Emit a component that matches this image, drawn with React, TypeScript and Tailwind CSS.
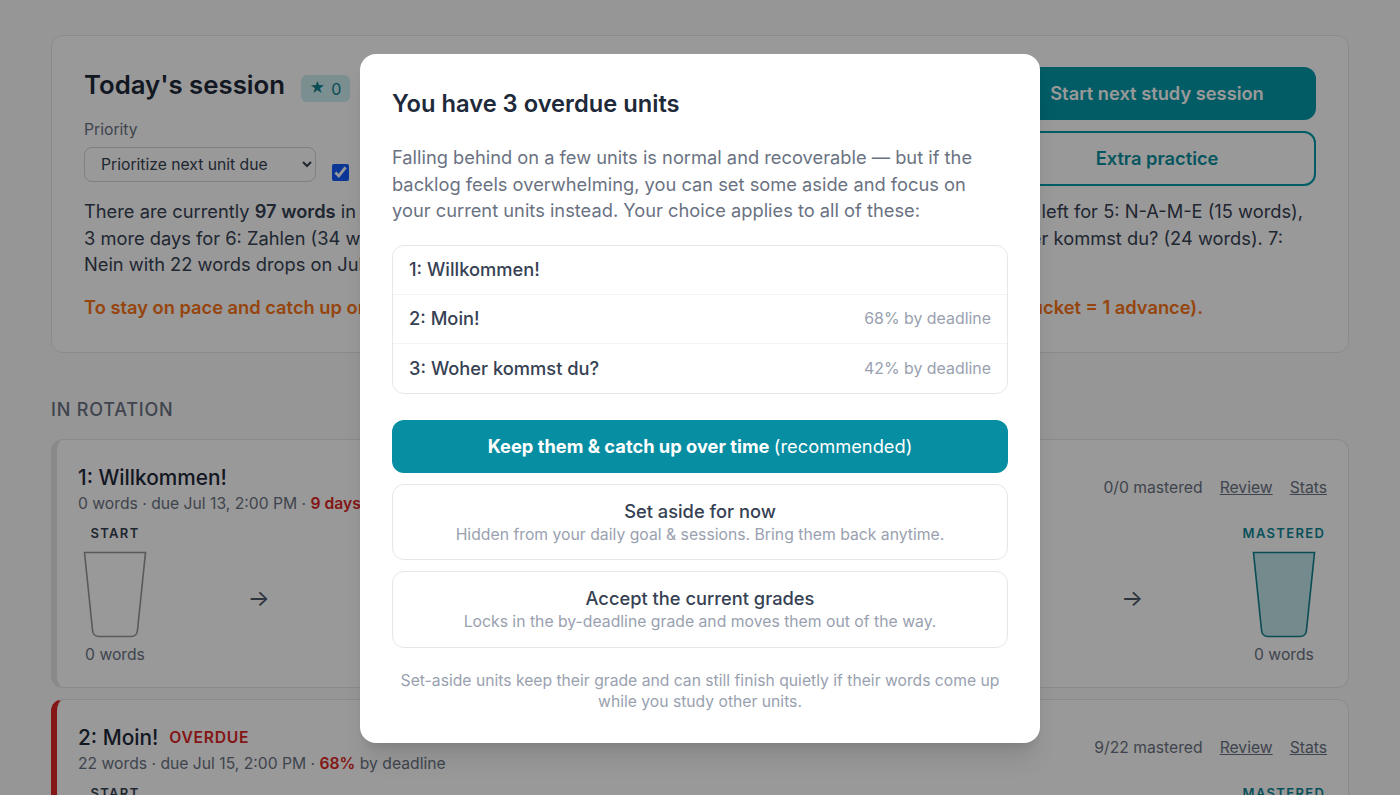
function Cup({ mastered }: { mastered?: boolean }) {
  return (
    <svg width="64" height="87" viewBox="0 0 64 87" className="block">
      <path
        d="M1.5 1.5H62.5L54.5 79Q54 85.5 48 85.5H16Q10 85.5 9.5 79Z"
        fill={mastered ? '#c4e6ea' : 'none'}
        stroke={mastered ? '#0e7f8c' : '#969696'}
        strokeWidth="1.6"
      />
    </svg>
  );
}

function Bucket({ label, mastered }: { label?: string; mastered?: boolean }) {
  return (
    <div className={`flex flex-col items-center ${mastered ? 'w-[86px]' : 'w-[62px]'}`}>
      <div className={`h-[20px] text-[13px] leading-[20px] font-semibold tracking-[1.35px] whitespace-nowrap ${mastered ? 'text-[#0e8796]' : 'text-gray-700'}`}>
        {label}
      </div>
      <div className="mt-[8px]">
        <Cup mastered={mastered} />
      </div>
      {label && <div className="mt-[5px] text-[15.7px] leading-[24px] text-gray-500 whitespace-nowrap">0 words</div>}
      {!label && <div className="mt-[5px] h-[24px]" />}
    </div>
  );
}

function Arrow({ className = '' }: { className?: string }) {
  return <span className={`text-[23px] leading-[24px] text-gray-600 mt-[5px] ${className}`}>→</span>;
}

function BucketRow() {
  return (
    <div className="flex justify-between items-center pl-[6px]">
      <Bucket label="START" />
      <Arrow className="-translate-x-[1px]" />
      <Bucket />
      <Arrow />
      <Bucket />
      <Arrow />
      <Bucket />
      <Arrow className="translate-x-[5px]" />
      <Bucket label="MASTERED" mastered />
    </div>
  );
}

function UnitCard({ title, overdue, meta, mastered, accent }: {
  title: string;
  overdue?: boolean;
  meta: React.ReactNode;
  mastered: string;
  accent: string;
}) {
  return (
    <section className={`h-[249px] shrink-0 rounded-xl border border-gray-200 border-l-[6px] ${accent} bg-white pl-[21px] pr-[21px] pt-[23px]`}>
      <div className="flex justify-between">
        <div>
          <div className="flex items-center gap-[11px]">
            <h3 className="text-[20.8px] leading-[30px] font-medium text-gray-800">{title}</h3>
            {overdue && <span className="text-[15.7px] font-semibold tracking-[0.7px] text-[#dc2626]">OVERDUE</span>}
          </div>
          <p className="text-[15.7px] leading-[21px] text-gray-500">{meta}</p>
        </div>
        <div className="flex gap-[17px] text-[15.7px] leading-[24px] text-gray-500 pt-[13px]">
          <span>{mastered}</span>
          <a className="underline">Review</a>
          <a className="underline">Stats</a>
        </div>
      </div>
      <div className="mt-[9px]">
        <BucketRow />
      </div>
    </section>
  );
}

function OverdueRow({ name, pct }: { name: string; pct?: string }) {
  return (
    <li className="h-[49px] flex items-center justify-between px-4 pt-[1px] border-b border-gray-100 last:border-b-0">
      <span className="text-[18.3px] font-medium text-gray-700">{name}</span>
      {pct && <span className="text-[15.9px] text-gray-400">{pct} by deadline</span>}
    </li>
  );
}

function ChoiceButton({ title, hint }: { title: string; hint: string }) {
  return (
    <button className="h-[76.5px] w-full rounded-xl border border-gray-200 bg-white text-center">
      <span className="block text-[18.3px] leading-[26px] font-medium text-gray-700">{title}</span>
      <span className="block text-[15.75px] leading-[22px] text-gray-400">{hint}</span>
    </button>
  );
}

export default function App() {
  return (
    <div className="relative h-screen overflow-hidden bg-[#fafafa] font-['Inter',sans-serif]">
      <main className="flex flex-col px-[51px] pt-[35px]">
        <section className="h-[318px] shrink-0 rounded-xl border border-gray-200 bg-white px-[32px] pt-[31px]">
          <div className="flex justify-between">
            <div>
              <div className="flex items-center gap-[16px] h-[40px]">
                <h2 className="-mt-[4px] text-[25.75px] font-semibold text-gray-800">Today's session</h2>
                <span className="mt-[3px] h-[27px] w-[49px] rounded-md bg-[#cdeef2] flex items-center justify-center gap-[6px] text-base text-[#0e7f8c]">
                  <span className="text-[15px]">★</span>0
                </span>
              </div>
              <label className="block mt-[11px] mb-[5px] text-[15.7px] leading-[24px] text-gray-500">Priority</label>
              <div className="flex items-start gap-[16px]">
                <select className="h-[35px] w-[232px] rounded-lg border border-gray-300 pl-[12px] text-[15.7px] text-gray-700">
                  <option>Prioritize next unit due</option>
                </select>
                <input type="checkbox" defaultChecked className="mt-[17px] w-[17px] h-[17px] accent-blue-600" />
              </div>
            </div>
            <div className="w-[318px] flex flex-col gap-[11px]">
              <button className="h-[53px] rounded-xl bg-[#029aa9] text-[18.3px] font-semibold text-white">Start next study session</button>
              <button className="h-[55px] rounded-xl border-2 border-[#029aa9] text-[18.3px] font-semibold text-[#0a8fa0]">Extra practice</button>
            </div>
          </div>
          <div className="mt-[12px] text-[18.3px] leading-[26.5px] text-gray-700">
            <div className="flex justify-between whitespace-nowrap">
              <span>There are currently <b className="font-semibold">97 words</b> in</span>
              <span className="mr-[13px]">days left for 5: N-A-M-E (15 words),</span>
            </div>
            <div className="flex justify-between whitespace-nowrap">
              <span>3 more days for 6: Zahlen (34 words)</span>
              <span className="mr-[33px]">Woher kommst du? (24 words). 7:</span>
            </div>
            <div>Nein with 22 words drops on Jul 20.</div>
          </div>
          <div className="mt-[16px] flex justify-between whitespace-nowrap text-[18.3px] font-semibold text-[#f97316]">
            <span>To stay on pace and catch up on</span>
            <span className="mr-[113px]">1 bucket = 1 advance).</span>
          </div>
        </section>
        <h3 className="mt-[45px] text-lg leading-[24px] font-medium tracking-[0.8px] text-gray-500">IN ROTATION</h3>
        <div className="mt-[17px] flex flex-col gap-[11px]">
          <UnitCard
            title="1: Willkommen!"
            accent="border-l-[#e4e4e4]"
            mastered="0/0 mastered"
            meta={<>0 words · due Jul 13, 2:00 PM · <b className="font-semibold text-[#dc2626]">9 days</b></>}
          />
          <UnitCard
            title="2: Moin!"
            overdue
            accent="border-l-[#dc2626]"
            mastered="9/22 mastered"
            meta={<>22 words · due Jul 15, 2:00 PM · <b className="font-semibold text-[#dc2626]">68%</b> by deadline</>}
          />
        </div>
      </main>

      <div className="absolute inset-0 bg-black/40 flex items-start justify-center pt-[54px]">
        <div className="w-[680px] h-[689px] rounded-2xl bg-white p-8 shadow-xl">
          <h2 className="text-[23.7px] leading-[36px] font-semibold text-gray-800">You have 3 overdue units</h2>
          <p className="mt-[22px] text-[18.3px] leading-[26.5px] text-gray-500">
            Falling behind on a few units is normal and recoverable — but if the backlog feels overwhelming, you can set some aside and focus on your current units instead. Your choice applies to all of these:
          </p>
          <ul className="mt-[21px] rounded-xl border border-gray-200">
            <OverdueRow name="1: Willkommen!" />
            <OverdueRow name="2: Moin!" pct="68%" />
            <OverdueRow name="3: Woher kommst du?" pct="42%" />
          </ul>
          <div className="mt-[26px] flex flex-col gap-[11px]">
            <button className="h-[53px] rounded-xl bg-[#078ea2] pt-[1px] text-[18.3px] font-bold text-white">
              Keep them &amp; catch up over time <span className="font-normal">(recommended)</span>
            </button>
            <ChoiceButton title="Set aside for now" hint="Hidden from your daily goal & sessions. Bring them back anytime." />
            <ChoiceButton title="Accept the current grades" hint="Locks in the by-deadline grade and moves them out of the way." />
          </div>
          <p className="mt-[22px] text-center text-[15.7px] leading-[21.5px] text-gray-400">
            Set-aside units keep their grade and can still finish quietly if their words come up while you study other units.
          </p>
        </div>
      </div>
    </div>
  );
}
